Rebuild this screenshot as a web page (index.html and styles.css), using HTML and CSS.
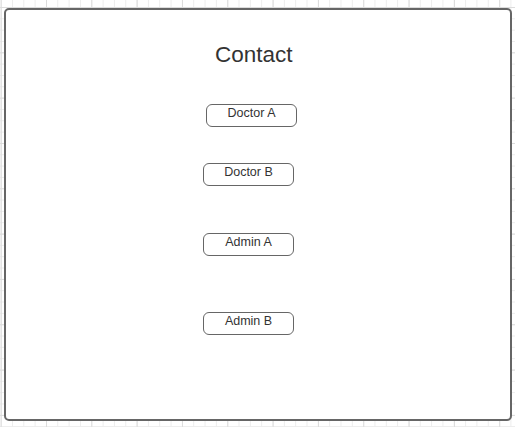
FILE: index.html
```html
<!DOCTYPE html>
<html>
<head>
<meta charset="utf-8">
<link rel="stylesheet" href="styles.css">
</head>
<body>
<div class="frame">
  <h1 class="title">Contact</h1>
  <div class="btn btn-a">Doctor A</div>
  <div class="btn btn-b">Doctor B</div>
  <div class="btn btn-c">Admin A</div>
  <div class="btn btn-d">Admin B</div>
</div>
</body>
</html>
```
FILE: styles.css
```css
html, body {
  margin: 0;
  padding: 0;
}
body {
  width: 515px;
  height: 427px;
  overflow: hidden;
  font-family: "Liberation Sans", Arial, sans-serif;
  background-color: #fff;
  background-image:
    linear-gradient(to right, #dcdcdc 1px, transparent 1px),
    linear-gradient(to bottom, #dcdcdc 1px, transparent 1px),
    linear-gradient(to right, #ececec 1px, transparent 1px),
    linear-gradient(to bottom, #ececec 1px, transparent 1px);
  background-size: 45.33px 45.33px, 45.33px 45.33px, 11.33px 11.33px, 11.33px 11.33px;
  background-position: 0.67px 7px, 0.67px 7px, 0.67px 7px, 0.67px 7px;
}
.frame {
  box-sizing: border-box;
  margin: 8px 0 0 4px;
  width: 508px;
  height: 413px;
  border: 2px solid #666;
  border-radius: 5px;
  background: #fff;
  display: flex;
  flex-direction: column;
  align-items: flex-start;
}
.title {
  margin: 32px 0 0 209px;
  font-size: 22.5px;
  line-height: 26px;
  font-weight: normal;
  color: #333;
}
.btn {
  box-sizing: border-box;
  width: 91px;
  height: 23px;
  border: 1px solid #666;
  border-radius: 6px;
  text-align: center;
  font-size: 12.5px;
  line-height: 17px;
  padding-bottom: 4px;
  color: #333;
}
.btn-a { margin: 36px 0 0 200px; }
.btn-b { margin: 36px 0 0 197px; }
.btn-c { margin: 47px 0 0 197px; }
.btn-d { margin: 56px 0 0 197px; }
```
